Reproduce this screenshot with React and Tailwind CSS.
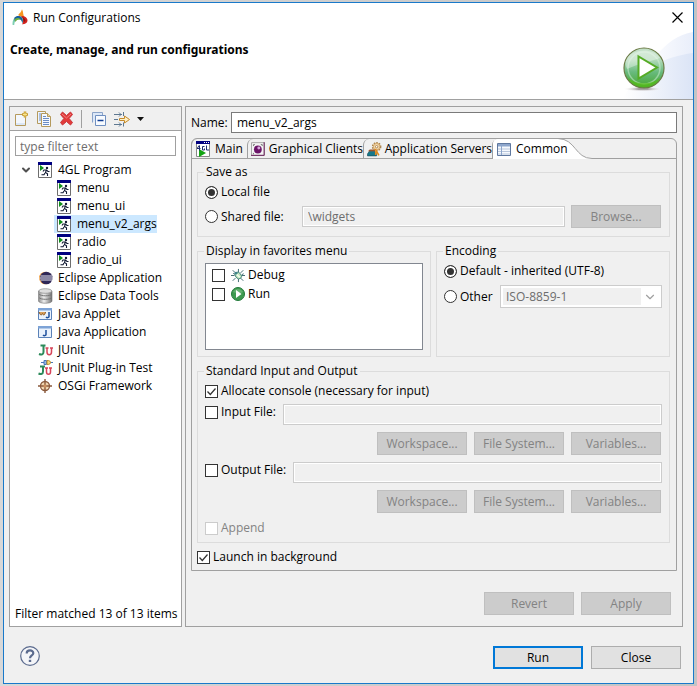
import { useState } from "react";
import { ChevronDown } from "lucide-react";

const launchTypes = [
    { name: "Eclipse Application", icon: EclipseIcon },
    { name: "Eclipse Data Tools", icon: DatabaseIcon },
    { name: "Java Applet", icon: AppletIcon },
    { name: "Java Application", icon: JavaIcon },
    { name: "JUnit", icon: JUnitIcon },
    { name: "JUnit Plug-in Test", icon: JUnitPluginIcon },
    { name: "OSGi Framework", icon: OsgiIcon },
];

const programs = ["menu", "menu_ui", "menu_v2_args", "radio", "radio_ui"];

function LogoIcon() {
    return (
        <svg width="16" height="17" viewBox="0 0 16 17">
            <path d="M10 .3c-.8 1.800-.8 3-2.600 4.200C6.300 5.300 6 6.500 7 6.800c2.800.3 4.600 1.900 4.800 4.600 1.300.8 2.600.4 3-.4-.4-1.600-1.600-2-2.600-3.200C11 6.300 11.500 3 10 .3z" fill="#f7941e" />
            <path d="M8.500 7.800c1.500-1 3.300-.8 4.500 0 1.600 1 2.600 2.400 2.500 4-.2 2.400-2.600 3.700-5.700 3.500 1.200-1 1.600-2.300 1.200-4-.3-1.400-1.300-2.700-2.500-3.500z" fill="#d3221d" />
            <path d="M9 8.300c1.800.5 2.700 2.200 2.400 4.200 1 .6 1.700.2 2-.8.2-1.500-1.600-3.300-4.400-3.400z" fill="#8e1512" />
            <path d="M.6 16C.2 11 2.400 6.900 6.600 6.900c2.700 0 4.600 1.900 4.500 4.700 0 1.200-.3 2-.8 2.600-.3-2.700-1.500-3.900-3.600-4-2.800-.1-4.300 2.200-4.500 5.800z" fill="#7fcfb2" />
            <path d="M2.400 8.800c2.200-2.400 6-2.200 7.600.2 1 1.600 1 3.600.3 5.200-.3-2.800-1.800-4.400-4.200-4.200-1.300.1-2.400.6-3.700 1.700z" fill="#1d5f9e" />
            <path d="M2.600 10.600c1.600-2 4.800-2 6.200 0-2.300-.5-4.300.2-5.400 2.400z" fill="#6fae3e" />
        </svg>
    );
}

function BannerArt() {
    return (
        <svg width="130" height="70" viewBox="0 0 130 70">
            <defs>
                <linearGradient id="swoosh" x1="0" x2="1">
                    <stop offset="0" stopColor="#fff" />
                    <stop offset="1" stopColor="#dbe4f6" />
                </linearGradient>
                <linearGradient id="swooshBack" x1="0" x2="1">
                    <stop offset="0.3" stopColor="#fff" />
                    <stop offset="1" stopColor="#e9eefa" />
                </linearGradient>
                <linearGradient id="ball" x1="0" y1="0" x2="0" y2="1">
                    <stop offset="0" stopColor="#c4e0c8" />
                    <stop offset="0.3" stopColor="#b2dab9" />
                    <stop offset="0.6" stopColor="#68ba7e" />
                    <stop offset="1" stopColor="#45a52c" />
                </linearGradient>
                <radialGradient id="ballShadow">
                    <stop offset="0.3" stopColor="#a9a3a6" />
                    <stop offset="1" stopColor="#fff" stopOpacity="0" />
                </radialGradient>
            </defs>
            <path d="M60 70C85 38 100 8 130 3v67z" fill="url(#swooshBack)" />
            <path d="M60 70C75 40 100 28 130 24v46z" fill="url(#swoosh)" />
            <ellipse cx="80" cy="60" rx="20" ry="2.500" fill="url(#ballShadow)" />
            <circle cx="81" cy="39" r="20" fill="url(#ball)" stroke="#6b7a45" strokeWidth="1.200" />
            <circle cx="81" cy="39" r="16" fill="none" stroke="#d4efd8" strokeWidth="1.500" opacity="0.5" />
            <path d="M64 29c6-9 26-11 33 0-8 3-22 6-33 11-2-4-2-7 0-11z" fill="#fff" opacity="0.35" />
            <path d="M65 49c8 7 24 7 32 0-3 6-9 9-16 9s-13-3-16-9z" fill="#56bd18" opacity="0.7" />
            <path d="M75.500 27.500v22L94 38.500z" fill="#fff" stroke="#55ab25" strokeWidth="2" />
        </svg>
    );
}

function NewIcon() {
    return (
        <svg width="16" height="16" viewBox="0 0 16 16">
            <path d="M1.500 3.500h8l2 3v8h-10z" fill="#f3f7fd" stroke="#b59a5c" />
            <path d="M2 12h9v2H2z" fill="#dbe7f6" />
            <path d="M11 .5v6M8 3.500h6" stroke="#c89b2c" strokeWidth="2.600" />
            <path d="M11 1.500v4M9 3.500h4" stroke="#f8e58c" />
        </svg>
    );
}

function CopyIcon() {
    return (
        <svg width="16" height="16" viewBox="0 0 16 16">
            <path d="M1.500 .5h8v12h-8z" fill="#eef4fc" stroke="#b59a5c" />
            <path d="M3 3h2M3 5h2M3 7h2M3 9h2" stroke="#6a8cc4" />
            <path d="M5.500 2.500h6l3 3v10h-9z" fill="#f5f9ff" stroke="#b59a5c" />
            <path d="M11.500 2.500v3h3" fill="#ecd9a0" stroke="#b59a5c" />
            <path d="M7 5.500h3M7 7.500h6M7 9.500h6M7 11.500h6M7 13.500h6" stroke="#6a8cc4" />
        </svg>
    );
}

function DeleteIcon() {
    return (
        <svg width="15" height="15" viewBox="0 0 15 15">
            <path d="M1.500 3.500l2-2.500 4 3.500 4-3.500 2 2.500-3.400 4 3.400 4-2 2.500-4-3.500-4 3.500-2-2.500 3.400-4z" fill="#e23a3a" stroke="#c8383c" />
            <path d="M3 3l4.500 4L12 3" fill="none" stroke="#f08080" />
        </svg>
    );
}

function CollapseIcon() {
    return (
        <svg width="14" height="14" viewBox="0 0 14 14">
            <path d="M.5 10.500v-10h10v3" fill="#dce8f8" stroke="#8aa3c8" />
            <path d="M3.500 3.500h10v10h-10z" fill="#f8fbff" stroke="#6f8fc0" />
            <path d="M5.500 8.500h6" stroke="#123f94" strokeWidth="1.500" />
        </svg>
    );
}

function FilterIcon() {
    return (
        <svg width="17" height="16" viewBox="0 0 17 16">
            <path d="M0 3.500h8M0 13.500h8" stroke="#5e7891" />
            <path d="M5 1.500l2 2-2 2M5 11.500l2 2-2 2M9.500 1v4M9.500 11.500v4" fill="none" stroke="#5e7891" />
            <path d="M0 8.500h4" stroke="#5e7891" />
            <path d="M5.500 7.500h5v-2.500l5 3.500-5 3.500v-2.500h-5z" fill="#fff0c4" stroke="#c58a2c" />
        </svg>
    );
}

function ProgramIcon() {
    return (
        <svg width="14" height="16" viewBox="0 0 14 16">
            <path d="M.5.5h13v15H.5z" fill="#fff" stroke="#6e6e6e" />
            <path d="M0 0h14v3H0z" fill="#000080" />
            <path d="M2 3l4 3-4 3z" fill="#0f8f1a" />
            <circle cx="9" cy="6" r="1.200" fill="#111a33" />
            <path d="M8.500 7.500L7.500 10.500l2 1.200v2.300M7 11l-1 1.700H3.500M5 9.500l1-1.500h2.500l1.500 1.500h1.500" fill="none" stroke="#111a33" strokeWidth="1.100" />
        </svg>
    );
}

function EclipseIcon() {
    return (
        <svg width="16" height="16" viewBox="0 0 16 16">
            <circle cx="7.300" cy="8" r="6.300" fill="#f3a64b" />
            <circle cx="8.300" cy="8" r="6.300" fill="#2f2757" />
            <path d="M2.500 6h11.800M1.500 8h13.500M2.500 10h11.800" stroke="#e8e8f2" strokeWidth="1.100" />
        </svg>
    );
}

function DatabaseIcon() {
    return (
        <svg width="16" height="16" viewBox="0 0 16 16">
            <defs>
                <linearGradient id="drum" x1="0" x2="1">
                    <stop offset="0" stopColor="#8b8b8b" />
                    <stop offset="0.4" stopColor="#efefef" />
                    <stop offset="1" stopColor="#737373" />
                </linearGradient>
            </defs>
            <path d="M.5 3v10c0 3 13.500 3 13.500 0V3z" fill="url(#drum)" stroke="#777" strokeWidth="0.600" />
            <path d="M1 6c1 2.400 12 2.400 13 0M1 9.500c1 2.400 12 2.400 13 0" fill="none" stroke="#777" />
            <ellipse cx="7.300" cy="3" rx="6.500" ry="2.300" fill="#dedede" stroke="#8a8a8a" strokeWidth="0.700" />
        </svg>
    );
}

function AppletIcon() {
    return (
        <svg width="14" height="12" viewBox="0 0 14 12">
            <path d="M.5.5h13v11H.5z" fill="#eaf2fc" stroke="#5b82b8" />
            <path d="M0 0h14v2.500H0z" fill="#7da3d6" />
            <path d="M1 4c1 3 2.500 4 3.500 1.500C5.500 8 7 7 7.500 4" fill="#d9a05b" stroke="#8c5a28" />
            <path d="M11 4v4.500c0 1.300-2 1.500-3 .5" fill="none" stroke="#1d4f9c" strokeWidth="1.500" />
        </svg>
    );
}

function JavaIcon() {
    return (
        <svg width="14" height="12" viewBox="0 0 14 12">
            <path d="M.5.5h13v11H.5z" fill="#eaf2fc" stroke="#5b82b8" />
            <path d="M0 0h14v2.500H0z" fill="#7da3d6" />
            <path d="M8 4v4.500c0 1.300-2 1.500-3 .5" fill="none" stroke="#1d4f9c" strokeWidth="1.500" />
        </svg>
    );
}

function JUnitIcon() {
    return (
        <svg width="15" height="12" viewBox="0 0 15 12">
            <path d="M2.500 1.500h5M5.500 1.500v6.500c0 2.500-2 3-4.500 2" fill="none" stroke="#2c8a5a" strokeWidth="2" />
            <path d="M7.500 4h3M12 4h3M9 4v4c0 3.500 4.500 3.500 4.500 0V4" fill="none" stroke="#d6455a" strokeWidth="1.500" />
        </svg>
    );
}

function JUnitPluginIcon() {
    return (
        <svg width="15" height="16" viewBox="0 0 15 16">
            <path d="M2 6.500h5M5 6.500v5c0 2.500-2 3-4.500 2" fill="none" stroke="#2c8a5a" strokeWidth="2" />
            <path d="M7 8h3M11 8h3M8.500 8v4c0 3 4 3 4 0V8" fill="none" stroke="#d6455a" strokeWidth="1.500" />
            <path d="M3 2.500h3M12 2.500h3" stroke="#4a78b8" />
            <path d="M6 .5h2.500v4H6z" fill="#8fb6e6" stroke="#4a78b8" />
            <path d="M9 .5c3 0 3.500 1 3.500 2s-.5 2-3.500 2z" fill="#f7dc7a" stroke="#b98d28" />
        </svg>
    );
}

function OsgiIcon() {
    return (
        <svg width="14" height="14" viewBox="0 0 14 14">
            <circle cx="7" cy="7" r="4.500" fill="#f3d9b4" stroke="#8a5a3c" strokeWidth="1.300" />
            <path d="M7 0v14M0 7h14" stroke="#8a5a3c" strokeWidth="1.400" />
            <circle cx="7" cy="7" r="1.800" fill="#c98f5e" />
        </svg>
    );
}

function MainTabIcon() {
    return (
        <svg width="14" height="16" viewBox="0 0 14 16">
            <path d="M.5.500h13v15H.5z" fill="#fff" stroke="#888" />
            <path d="M0 0h14v3H0z" fill="#000080" />
            <path d="M8 1.500h1M10 1.500h1M12 1.500h1" stroke="#fff" />
            <path d="M3 8l7 4-7 4z" fill="#13a313" />
            <path d="M3.500 4.500v5M1 7.500h3.500M1.500 7l1.500-2.500M8.500 5.500h-2v3.500h2V7.500M10.500 4.500v4.500h2.500" fill="none" stroke="#1c2a6e" />
        </svg>
    );
}

function ClientsIcon() {
    return (
        <svg width="14" height="14" viewBox="0 0 14 14">
            <path d="M.5.500h13v13H.5z" fill="#f4f4f4" stroke="#a5a5a5" />
            <path d="M13.500 0v13.500H0" fill="none" stroke="#6a1f5a" />
            <circle cx="7" cy="7.500" r="4" fill="#6b1468" />
            <circle cx="8" cy="6" r="1.500" fill="#d7a6dc" />
            <path d="M2.500 4V2.500H4M10 2.500h1.500V4M2.500 11v1.500" fill="none" stroke="#777" />
        </svg>
    );
}

function ServersIcon() {
    return (
        <svg width="16" height="16" viewBox="0 0 16 16">
            <circle cx="10.500" cy="5.500" r="4.200" fill="#f7e3c0" stroke="#a8824c" strokeWidth="2" strokeDasharray="1.600 1.100" />
            <circle cx="10.500" cy="5.500" r="3.500" fill="#f3d9ae" stroke="#d0a468" />
            <circle cx="10.500" cy="5.500" r="1.300" fill="#fff" stroke="#a8824c" />
            <path d="M.5 13.500l2-3h6l2 3v2H.5z" fill="#16788a" stroke="#174d5c" strokeWidth="0.700" />
            <path d="M1 10.500l2-2h5l1 2z" fill="#9b5328" />
            <path d="M9 8l4 7M9.500 10.500v4" stroke="#e08a1e" strokeWidth="1.700" />
        </svg>
    );
}

function CommonIcon() {
    return (
        <svg width="14" height="13" viewBox="0 0 14 13">
            <path d="M.5.500h13v12H.5z" fill="#f6f9fd" stroke="#5f789f" />
            <path d="M1 1h12v2.500H1z" fill="#8da6cc" />
            <path d="M1 6h12M1 8.500h12M1 11h12" stroke="#b8c6dc" />
            <path d="M4.500 3v9" stroke="#8da6cc" />
        </svg>
    );
}

function DebugIcon() {
    return (
        <svg width="15" height="15" viewBox="0 0 16 16">
            <path d="M5 5L2 2M8.500 4V.5M11 5l3-3M4 8H0M12 8h4M5 11l-3 3M8.500 12v3.500M11 11l3 3M2.500 5.500l2 1M14.500 6l-2 1" stroke="#2c5a62" />
            <ellipse cx="8.300" cy="8" rx="3.200" ry="4.200" transform="rotate(-40 8.300 8)" fill="#c3e6bf" stroke="#3c7f78" />
            <path d="M6.500 6.500l3.500 3.500" stroke="#f5fff0" strokeWidth="1.500" />
            <circle cx="5.800" cy="5.300" r="1.600" fill="#41858a" />
        </svg>
    );
}

function RunIcon() {
    return (
        <svg width="14" height="14" viewBox="0 0 14 14">
            <circle cx="7" cy="7" r="6.500" fill="#3e9a50" stroke="#237a3a" />
            <path d="M2 5c2-4 8-4 10 0-3 2-7 1-10 0z" fill="#7cc285" opacity="0.600" />
            <path d="M5 3v8l5.500-4z" fill="#fff" />
        </svg>
    );
}

function CloseIcon() {
    return (
        <svg width="11" height="11" viewBox="0 0 11 11">
            <path d="M.5.5l10 10M10.500.5l-10 10" stroke="#000" strokeWidth="1.200" />
        </svg>
    );
}

function HelpIcon() {
    return (
        <svg width="20" height="20" viewBox="0 0 20 20">
            <circle cx="10" cy="10" r="9.300" fill="#f4f5f8" stroke="#5b6b8e" strokeWidth="1.200" />
            <path d="M6.700 7.500c0-4 6.600-4 6.600-.3 0 2.300-3.300 2.300-3.300 5" fill="none" stroke="#5b6b8e" strokeWidth="2.200" />
            <path d="M8.800 13.800h2.400v2.200H8.800z" fill="#5b6b8e" />
        </svg>
    );
}

function Check({ label, checked = false, disabled, children }) {
    const [on, setOn] = useState(checked);
    return (
        <label className={`flex items-center gap-[3px] ${disabled ? "text-[#838383]" : ""}`}>
            <span className="grid">
                <input
                    type="checkbox"
                    checked={on}
                    disabled={disabled}
                    onChange={() => setOn(!on)}
                    className="col-start-1 row-start-1 size-[13px] appearance-none border border-[#333] bg-white disabled:border-[#ccc]"
                />
                {on && (
                    <svg className="pointer-events-none col-start-1 row-start-1" width="13" height="13" viewBox="0 0 13 13">
                        <path d="M2.500 6.500l2.800 3 5.200-6" fill="none" stroke="#333" strokeWidth="1.300" />
                    </svg>
                )}
            </span>
            {children}
            {label}
        </label>
    );
}

function Radio({ label, ...props }) {
    return (
        <label className="flex items-center gap-[3px]">
            <input
                type="radio"
                className="size-[13px] appearance-none rounded-full border border-[#333] bg-white checked:bg-[#333] checked:shadow-[inset_0_0_0_2px_#fff]"
                {...props}
            />
            {label}
        </label>
    );
}

function Button({ children, className = "border border-[#adadad] bg-[#e1e1e1]", ...props }) {
    return (
        <button
            type="button"
            className={`h-[23px] w-[90px] shrink-0 disabled:border-[#bfbfbf] disabled:bg-[#ccc] disabled:text-[#838383] ${className}`}
            {...props}
        >
            {children}
        </button>
    );
}

function DisabledField(props) {
    return (
        <input
            type="text"
            disabled
            className="h-[21px] min-w-0 flex-1 border border-[#ccc] bg-[#f0f0f0] px-[5px] text-[#6d6d6d] shadow-[inset_0_0_0_1px_#fff]"
            {...props}
        />
    );
}

function Group({ title, className = "", children }) {
    return (
        <fieldset className={`min-w-0 border border-[#dcdcdc] px-[7px] ${className}`}>
            <legend className="-ml-px px-0.5">{title}</legend>
            {children}
        </fieldset>
    );
}

function FileButtons() {
    return (
        <div className="mt-[7px] flex justify-end gap-[7px] pr-px">
            <Button disabled>Workspace...</Button>
            <Button disabled>File System...</Button>
            <Button disabled>Variables...</Button>
        </div>
    );
}

function Tab({ icon: Icon, children, className = "" }) {
    return (
        <button
            type="button"
            role="tab"
            aria-selected="false"
            className={`flex shrink-0 items-center whitespace-nowrap rounded-tl-md border-b border-l border-[#a0a0a0] ${className}`}
        >
            <Icon />
            {children}
        </button>
    );
}

function Sidebar() {
    return (
        <aside className="flex w-[173px] shrink-0 flex-col border border-[#a0a0a0] bg-white">
            <div className="flex h-6 items-center border-b border-[#a0a0a0] bg-[#f0f0f0] pl-1">
                <button type="button" aria-label="New"><NewIcon /></button>
                <button type="button" aria-label="Duplicate" className="ml-1.5"><CopyIcon /></button>
                <button type="button" aria-label="Delete" className="ml-[7px]"><DeleteIcon /></button>
                <span className="ml-[7px] h-[18px] w-px bg-[#a0a0a0]" />
                <button type="button" aria-label="Collapse all" className="ml-2.5"><CollapseIcon /></button>
                <button type="button" aria-label="Filter" className="ml-2 flex items-center gap-1.5">
                    <FilterIcon />
                    <svg width="7" height="4" viewBox="0 0 7 4">
                        <path d="M0 0h7L3.500 4z" fill="#111" />
                    </svg>
                </button>
            </div>
            <input
                type="text"
                aria-label="Filter"
                placeholder="type filter text"
                className="mx-[5px] mt-[5px] h-5 border border-[#a0a0a0] px-1 placeholder:text-[#6d6d6d]"
            />
            <ul className="mt-[5px] pl-2.5">
                <li>
                    <div className="flex h-[18px] items-center">
                        <ChevronDown size={12} strokeWidth={4} color="#505050" />
                        <span className="ml-1.5 flex w-5"><ProgramIcon /></span>
                        4GL Program
                    </div>
                    <ul className="pl-[34px]">
                        {programs.map((name) => (
                            <li key={name} className={`flex h-[18px] w-fit items-center pl-[3px] ${name === "menu_v2_args" ? "bg-[#cce8ff]" : ""}`}>
                                <span className="flex w-5"><ProgramIcon /></span>
                                {name}
                            </li>
                        ))}
                    </ul>
                </li>
                {launchTypes.map(({ name, icon: Icon }) => (
                    <li key={name} className="flex h-[18px] items-center pl-[18px]">
                        <span className="flex w-5"><Icon /></span>
                        {name}
                    </li>
                ))}
            </ul>
            <p className="mt-auto pb-1 pl-[5px]">Filter matched 13 of 13 items</p>
        </aside>
    );
}

function CommonTab() {
    return (
        <div className="py-[5px] pl-[5px] pr-1.5">
            <Group title="Save as" className="pb-2">
                <div className="mt-1 flex flex-col">
                    <Radio label="Local file" name="save" defaultChecked />
                    <div className="mt-[5px] flex items-center">
                        <div className="w-[97px]">
                            <Radio label="Shared file:" name="save" />
                        </div>
                        <DisabledField aria-label="Shared file location" defaultValue="\widgets" />
                        <div className="ml-1.5 flex pr-px">
                            <Button disabled>Browse...</Button>
                        </div>
                    </div>
                </div>
            </Group>
            <div className="mt-1.5 grid grid-cols-2 gap-[5px]">
                <Group title="Display in favorites menu" className="pb-1.5">
                    <div className="mt-1 flex h-[87px] flex-col gap-[3px] border border-[#828790] bg-white px-1.5 py-[3px]">
                        <Check label="Debug">
                            <span className="ml-[3px] flex w-[14px]"><DebugIcon /></span>
                        </Check>
                        <Check label="Run">
                            <span className="ml-[3px] flex w-[14px]"><RunIcon /></span>
                        </Check>
                    </div>
                </Group>
                <Group title="Encoding">
                    <div className="mt-1 flex flex-col gap-1.5">
                        <Radio label="Default - inherited (UTF-8)" name="encoding" defaultChecked />
                        <div className="flex items-center">
                            <div className="w-14">
                                <Radio label="Other" name="encoding" />
                            </div>
                            <div className="flex h-[23px] flex-1 items-center border border-[#ccc] bg-white p-0.5">
                                <select disabled aria-label="Encoding" className="h-full flex-1 appearance-none bg-[#f0f0f0] pl-[3px] text-[#6d6d6d]">
                                    <option>ISO-8859-1</option>
                                </select>
                                <ChevronDown size={14} color="#a0a0a0" className="mx-0.5" />
                            </div>
                        </div>
                    </div>
                </Group>
            </div>
            <Group title="Standard Input and Output" className="mt-1.5 pb-1.5">
                <div className="mt-1">
                    <Check label="Allocate console (necessary for input)" checked />
                </div>
                <div className="mt-[5px] flex items-start">
                    <div className="w-[78px]">
                        <Check label="Input File:" />
                    </div>
                    <DisabledField aria-label="Input file path" />
                </div>
                <FileButtons />
                <div className="mt-[7px] flex items-start">
                    <div className="w-[88px]">
                        <Check label="Output File:" />
                    </div>
                    <DisabledField aria-label="Output file path" />
                </div>
                <FileButtons />
                <div className="mt-[7px]">
                    <Check label="Append" disabled />
                </div>
            </Group>
            <div className="mt-1.5">
                <Check label="Launch in background" checked />
            </div>
        </div>
    );
}

export default function App() {
    return (
        <div className="flex min-h-screen bg-linear-to-r from-[#d8d8d8] to-[#c4c4c4] px-[3px] py-0.5 font-['Open_Sans','Noto_Sans',sans-serif] text-[12px] leading-4 text-black">
            <div className="flex flex-1 flex-col border border-[#1979ca] bg-[#f0f0f0]">
                <header className="relative h-[97px] border-b border-[#a0a0a0] bg-white">
                    <div className="absolute bottom-0 right-0"><BannerArt /></div>
                    <div className="relative flex items-center pl-2 pr-2.5 pt-1.5">
                        <LogoIcon />
                        <span className="ml-[5px]">Run Configurations</span>
                        <button type="button" aria-label="Close window" className="ml-auto">
                            <CloseIcon />
                        </button>
                    </div>
                    <h1 className="relative mt-4 pl-1.5 font-['Noto_Sans','Open_Sans',sans-serif] text-[12px] font-bold">Create, manage, and run configurations</h1>
                </header>

                <main className="flex flex-1 gap-[3px] pl-[5px] pr-2.5 pt-1.5">
                    <Sidebar />
                    <section className="flex min-w-0 flex-1 flex-col border border-[#a0a0a0] p-[5px]">
                        <label className="flex items-center">
                            <span className="w-10">Name:</span>
                            <input type="text" defaultValue="menu_v2_args" className="h-[21px] min-w-0 flex-1 border border-[#7a7a7a] bg-white px-[5px]" />
                        </label>
                        <div className="mt-[5px] rounded-t-md border border-[#a0a0a0]">
                            <div role="tablist" className="-ml-px flex h-5">
                                <Tab icon={MainTabIcon} className="w-14 gap-[5px] pl-1">Main</Tab>
                                <Tab icon={ClientsIcon} className="w-[116px] gap-1 pl-[3px]">Graphical Clients</Tab>
                                <Tab icon={ServersIcon} className="w-[129px] gap-[3px] pl-[3px]">Application Servers</Tab>
                                <button
                                    type="button"
                                    role="tab"
                                    aria-selected="true"
                                    className="relative flex w-[100px] shrink-0 items-center rounded-tl-md border-l border-[#a0a0a0] pl-1"
                                >
                                    <svg className="absolute left-0 top-0" width="99" height="20" viewBox="0 0 99 20">
                                        <path d="M5 0Q0 0 0 5v15h99v-.5C82 18 83 0 65 0z" fill="#fff" />
                                        <path d="M99 20H82v-8c5 6 8 7.500 17 7.500z" fill="#fff" />
                                        <path d="M65-.5C83 0 82 19.500 99 19.500" fill="none" stroke="#a0a0a0" />
                                    </svg>
                                    <span className="relative flex items-center gap-[5px]">
                                        <CommonIcon />
                                        Common
                                    </span>
                                </button>
                                <span className="flex-1 border-b border-[#a0a0a0]" />
                            </div>
                            <CommonTab />
                        </div>
                        <div className="mb-1.5 mt-[21px] flex justify-end gap-[7px] pr-1.5">
                            <Button disabled>Revert</Button>
                            <Button disabled>Apply</Button>
                        </div>
                    </section>
                </main>

                <footer className="flex items-start gap-2 px-3 pb-[14px] pt-[19px]">
                    <button type="button" aria-label="Help" className="ml-1 mr-auto"><HelpIcon /></button>
                    <Button className="border-2 border-[#0078d7] bg-[#e1e1e1]">Run</Button>
                    <Button>Close</Button>
                </footer>
            </div>
        </div>
    );
}
